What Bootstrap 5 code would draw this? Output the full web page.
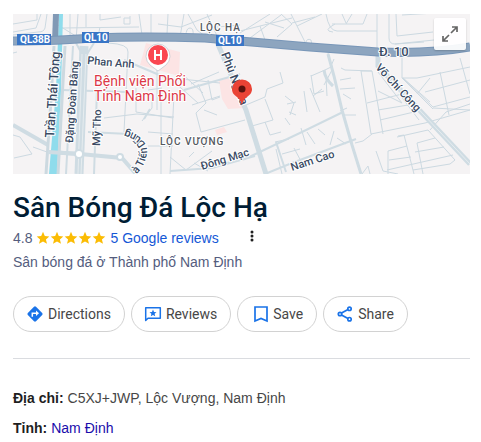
<!DOCTYPE html>
<html lang="vi">
<head>
<meta charset="utf-8">
<meta name="viewport" content="width=device-width, initial-scale=1">
<title>Sân Bóng Đá Lộc Hạ</title>
<link rel="stylesheet" href="https://cdn.jsdelivr.net/npm/bootstrap@5.3.0/dist/css/bootstrap.min.css">
<style>
body{font-family:"Liberation Sans",Arial,sans-serif;font-size:14px;line-height:20px;color:#474747;background:#fff}
.place{padding:14px 11px 4px 13px}
.map-frame svg.map{display:block;width:100%;height:auto}
.map text{font-family:Roboto,sans-serif;paint-order:stroke;stroke:#fff;stroke-width:2px;stroke-linejoin:round;fill:#3a4b64}
.map .street{font-size:11px;font-weight:500}
.map .shield text{stroke:none;fill:#fff;font-weight:700;font-size:10px}
.map .district text{fill:#54585e;font-size:10px;font-weight:500;letter-spacing:1px}
.map .clinic text{fill:#dc3847;font-size:14px}
.expand-btn{top:4px;right:4px;width:32px;height:32px;background:rgba(255,255,255,.92);border-radius:2px;box-shadow:0 1px 2px rgba(0,0,0,.2)}
.place-title{font-family:Roboto,sans-serif;font-size:28px;line-height:36px;font-weight:500;color:#001d35;margin-top:16px}
.rating{margin-top:2px}
.muted{color:#545d7e}
.reviews-link{color:#1558d6}
.more-btn{width:20px;height:20px;margin-left:23px}
.pill-row{gap:6px;margin-top:24px}
.pill{font-family:Roboto,sans-serif;font-size:14px;line-height:20px;color:#474747;height:36px;border:1px solid #d2d2d2;padding:0 13px 0 11px;gap:3px}
.pill svg{width:20px;height:20px}
.pill-save{padding-left:13px;gap:2px}
.rule{border-top:1px solid #dadce0;margin-top:26px}
.facts{margin-top:29px;gap:10px}
.facts dt{color:#1f1f1f}
.province{color:#1a0dab}
</style>
</head>
<body>
<main class="place">
<div class="map-frame position-relative">
<svg class="map" viewBox="13 14 457 160" role="img" aria-label="Bản đồ Lộc Hạ">
<rect x="13" y="14" width="457" height="160" fill="#f5f3f4"/>
<g fill="#fce4e4">
<path d="M146 43L180 52L179 76L140 65Z"/><path d="M219 81L229 78L246 90L244 108L228 109L222 99Z"/><path d="M215 130L224 127L227 132L217 135Z"/>
</g>
<g fill="none" stroke="#ccd9e1" stroke-width="1">
<path d="M13 24L37 20V14M13 32L36 28L41 14M47 14L45 28Q44 32 38 32L13 35M70 14V38M78 14L76 40M58 25L79 38M62 28L139 27M86 14V27M100 14V20L121 17M130 16V24H124V18H130M139 14L142 35M151 14V34M168 14L167 34M184 14L180 37M100 27L98 37M186 36Q186 28 190 28T193 36M158 24L181 27L212 15"/>
<path d="M188 14L197 30L210 40M207 14L217 36M217 27L240 25M240 33L270 14M250 38L281 15M260 26L265 40M240 31L292 18M277 37L292 24L281 14M265 22L284 28M291 14L305 42M297 26L322 14M292 23L315 17M326 14Q329 31 337 31H377M335 24Q322 31 333 32M332 24H363L367 14M342 14L346 23M352 14L346 24M377 14V60M389 14V38Q389 44 395 44L424 42M396 14L397 36L433 32M306 42Q307 38 311 40L312 45M402 15L435 13M395 44L434 40"/>
<path d="M13 53L17 52M13 135L20 137L32 154L14 158M33 147L47 152M108 43Q129 44 128 52L124 132M136 88V112L173 118M148 90L162 88M142 121L152 108V95M161 90V174M148 132L173 134M148 146H173M174 95L170 174M104 118L137 114L174 117M157 70V110M172 80L198 103M180 72L203 93M191 84L219 72M181 79L220 83M192 105L220 96M198 84L206 103M208 80L212 100L220 97M206 103L196 113L201 132L245 120M204 110L217 115M170 157L186 170L212 151M189 157L194 152M194 163L208 171"/>
<path d="M280 72L283 83L267 89L265 97L246 105M265 99L273 120L252 126M265 122L270 135L281 132M328 53L332 70L324 85M334 59L331 66M311 76L325 70L333 66M311 75L314 94L324 91M341 68L345 70L372 71L361 71L371 134M372 71L383 134M371 134L425 123L470 110M402 58V78L433 109M378 72L402 103M403 78L430 102M402 78H417L470 67M402 103L378 91M403 78L433 107L470 97M417 94L430 78M440 72L449 115M460 58L470 94M425 92L470 80M367 103L402 94M380 120L414 112M400 95L419 120M378 110L414 104M433 108L470 110"/>
<path d="M285 96L294 103L290 115M287 104L296 102M304 91L307 112M310 88L320 112M313 96L322 89M296 115L289 112M285 118L290 125M301 128L306 145M307 132L315 144M334 131L330 145M318 129L325 135M344 115H356M340 89L355 88M343 94L351 99M276 149L282 174M294 148L303 165M275 142L289 139M282 154L300 149M337 138L346 144M355 143L363 141L372 134M376 151L383 171L398 174M398 136L404 135L414 174M388 151L407 146M388 151V174M417 143L423 174M389 160L411 157M387 170L453 155M397 137L428 130L455 160L450 164L413 170M417 143L435 138M415 152L444 147M430 130L446 112L470 104M362 174L368 166L370 174M340 111L347 108M351 78L340 80M326 77L327 96"/>
</g>
<g fill="none" stroke="#cfdce3">
<path d="M13 125L48 145M48 152L80 154L122 158L136 174" stroke-width="4"/>
<path d="M84 46L79 174" stroke-width="9"/>
<path d="M76 43L82 54M94 43L87 54M73 46L66 174M97 90L94 174M88 132L129 134M62 90L126 92" stroke-width="2"/>
<path d="M124 60L164 77M150 109L144 119M184 90L240 74" stroke-width="2"/>
<path d="M217 42L246 110L266 174" stroke-width="5"/>
<path d="M213 166L245 159L302 132L343 112M170 171L212 168L255 156M265 174L292 163L356 139M276 142L286 172" stroke-width="2"/>
<path d="M328 54L334 76L342 110L352 145L361 174M324 70Q325 79 333 86" stroke-width="3"/>
<path d="M378 56V66L470 164" stroke-width="5"/>
</g>
<path d="M378 66L470 164M82 54L78 174M86 54L81 174" stroke="#e6ecef" stroke-width="1" fill="none"/>
<path d="M59 14H63L61 90L57 174H49L56 90Z" fill="#8fdcec"/>
<g fill="none"><path d="M54 46L51 100L46 174M65 46L62 100L58 174" stroke="#ccd9e0" stroke-width="3"/><path d="M48 152L80 154" stroke="#cfdce3" stroke-width="4"/><path d="M56 14L55 42" stroke="#8199b5" stroke-width="6"/><path d="M13 41Q60 41 90 38Q145 36 205 38L310 47L378 52Q430 54 470 47" stroke="#7896b8" stroke-width="9"/><path d="M13 41Q60 41 90 38Q145 36 205 38L310 47L378 52Q430 54 470 47" stroke="#8da5bf" stroke-width="7"/></g>
<g fill="#fff" stroke="#cfdce3" stroke-width="2"><circle cx="79" cy="154" r="4"/><circle cx="120" cy="157" r="3"/></g>
<g class="shield"><g fill="#3975c6"><rect x="17" y="34" width="34" height="11"/><rect x="82" y="32" width="27" height="11"/><rect x="216" y="35" width="28" height="11"/></g>
<text x="20" y="43">QL38B</text><text x="84" y="41">QL10</text><text x="218" y="44">QL10</text></g>
<g class="district"><text x="200" y="31">LỘC HẠ</text><text x="160" y="145">LỘC VƯỢNG</text></g>
<g class="street">
<text transform="translate(87 64) rotate(5)">Phan Anh</text>
<text transform="translate(54 138) rotate(-86)" font-size="13">Trần Thái Tông</text>
<text transform="translate(73 143) rotate(-86)">Đặng Đoàn Bằng</text>
<text transform="translate(100 146) rotate(-88)">Mỹ Tho</text>
<text transform="translate(221 54) rotate(69)" font-size="12">Phù Nghĩa</text>
<text transform="translate(202 170) rotate(-17)">Đông Mạc</text>
<text transform="translate(292 171) rotate(-18)">Nam Cao</text>
<text transform="translate(375 68) rotate(47)">Võ Chí Công</text>
<path id="curved-street" d="M134 176Q145 168 147 152Q147 134 118 128" fill="none"/>
<text><textPath href="#curved-street" startOffset="3">à Tiến Dũng</textPath></text>
</g>
<text x="379" y="56" font-size="13" font-weight="500">Đ. 10</text>
<g class="clinic"><text x="94" y="86">Bệnh viện Phổi</text><text x="94" y="101">Tỉnh Nam Định</text></g>
<path d="M158 71L150 65A12 12 0 1 1 166 65Z" fill="#fff" stroke="#bac5ce" stroke-width=".7"/><circle cx="158" cy="55" r="10" fill="#fa4751"/><path d="M155 50V60M161 50V60M155 55H161" stroke="#fff" stroke-width="2" fill="none"/>
<path d="M242 106C241 96 232 97 232 89A10 9.500 0 0 1 252 89C252 97 243 96 242 106Z" fill="#ea4335"/><circle cx="242" cy="89" r="3.500" fill="#5a120d"/>
</svg>
<button type="button" class="btn expand-btn position-absolute p-0 d-flex align-items-center justify-content-center" aria-label="Mở rộng bản đồ"><svg width="18" height="18" viewBox="0 0 18 18" fill="none" stroke="#666" stroke-width="1.700"><path d="M10 8L16 2M11 2H16V7M8 10L2 16M2 11V16H7"/></svg></button>
</div>
<h1 class="place-title mb-0">Sân Bóng Đá Lộc Hạ</h1>
<div class="rating d-flex align-items-center muted">
<span>4.8</span>
<svg width="70" height="14" viewBox="0 0 70 14" class="mx-1" role="img" aria-label="4.8 / 5" fill="#fbbc04"><defs><path id="star" d="M7 .8L8.800 5L13.300 5.400L9.900 8.400L11 12.800L7 10.400L3 12.800L4.100 8.400L.7 5.400L5.200 5Z"/></defs><use href="#star"/><use href="#star" x="14"/><use href="#star" x="28"/><use href="#star" x="42"/><use href="#star" x="56"/></svg>
<a href="#" class="reviews-link text-decoration-none">5 Google reviews</a>
<button type="button" class="btn more-btn p-0 border-0 d-flex align-items-start justify-content-center" aria-label="More"><svg width="4" height="16" viewBox="0 0 4 16" fill="#1f1f1f"><circle cx="2" cy="4" r="1.500"/><circle cx="2" cy="8" r="1.500"/><circle cx="2" cy="12" r="1.500"/></svg></button>
</div>
<div class="muted mt-1">Sân bóng đá ở Thành phố Nam Định</div>
<div class="pill-row d-flex flex-wrap">
<button type="button" class="btn pill rounded-pill d-inline-flex align-items-center"><svg viewBox="0 0 20 20"><path d="M9 2.800Q10 1.900 11 2.800L17.200 9Q18.100 10 17.200 11L11 17.200Q10 18.100 9 17.200L2.800 11Q1.900 10 2.800 9Z" fill="#1a73e8"/><path d="M7.300 12.700V9.200H12" fill="none" stroke="#fff" stroke-width="1.500"/><path d="M11 6.400L14 9.200L11 12Z" fill="#fff"/></svg>Directions</button>
<button type="button" class="btn pill rounded-pill d-inline-flex align-items-center"><svg viewBox="0 0 20 20"><path d="M2.700 16.500V3.700H17.300V14.300H5Z" fill="none" stroke="#1a73e8" stroke-width="1.500" stroke-linejoin="round"/><path d="M10 5.500L11 8L13.500 8.200L11.600 9.800L12.200 12.200L10 10.900L7.800 12.200L8.400 9.800L6.500 8.200L9 8Z" fill="#1a73e8"/></svg>Reviews</button>
<button type="button" class="btn pill pill-save rounded-pill d-inline-flex align-items-center"><svg viewBox="0 0 20 20"><path d="M4 3H16V17L10 14.500L4 17Z" fill="none" stroke="#1a73e8" stroke-width="1.700"/></svg>Save</button>
<button type="button" class="btn pill rounded-pill d-inline-flex align-items-center"><svg viewBox="0 0 20 20" fill="none" stroke="#1a73e8" stroke-width="1.700"><path d="M6.500 9L13 5.500M6.500 11L13 14.500"/><circle cx="5" cy="10" r="1.700"/><circle cx="14.500" cy="4.800" r="1.700"/><circle cx="14.500" cy="15.200" r="1.700"/></svg>Share</button>
</div>
<div class="rule"></div>
<dl class="facts mb-0 d-flex flex-column">
<div class="d-flex gap-1"><dt>Địa chỉ:</dt><dd class="mb-0">C5XJ+JWP, Lộc Vượng, Nam Định</dd></div>
<div class="d-flex gap-1"><dt>Tỉnh:</dt><dd class="mb-0"><a href="#" class="province text-decoration-none">Nam Định</a></dd></div>
</dl>
</main>
<script src="https://cdn.jsdelivr.net/npm/bootstrap@5.3.0/dist/js/bootstrap.bundle.min.js"></script>
</body>
</html>
